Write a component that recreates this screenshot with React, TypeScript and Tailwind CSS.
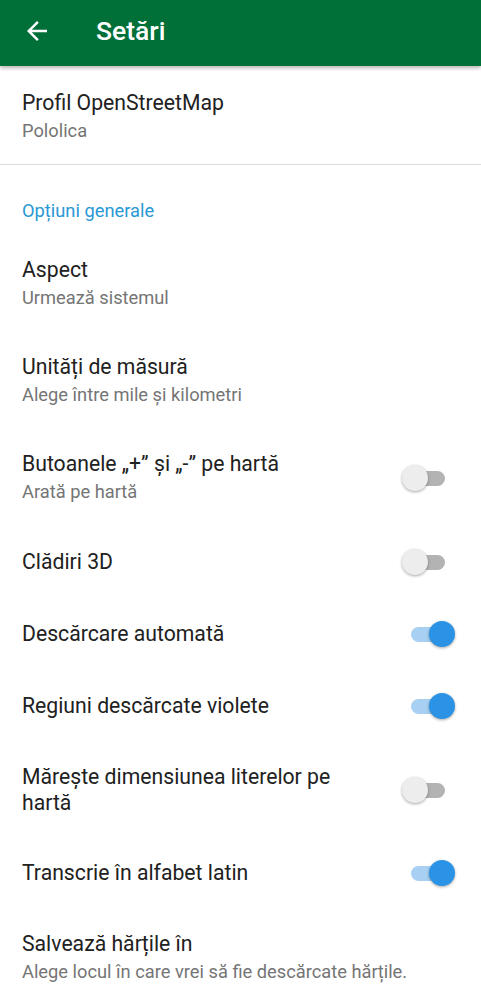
import React from "react";

function Switch({ on }: { on: boolean }) {
  return (
    <div className="relative w-[56px] h-[30px] shrink-0">
      <div
        className={
          "absolute left-[10px] top-[8px] w-[34px] h-[15px] rounded-full " +
          (on ? "bg-[#a7d0f3]" : "bg-[#b3b3b3]")
        }
      />
      <div
        className={
          "absolute top-[2px] w-[26px] h-[26px] rounded-full shadow-[0_1px_3px_rgba(0,0,0,0.35)] " +
          (on ? "left-[28px] bg-[#2a93e6]" : "left-[1px] bg-[#ededed]")
        }
      />
    </div>
  );
}

function Item({
  title,
  sub,
  sw,
  h,
}: {
  title: React.ReactNode;
  sub?: string;
  sw?: boolean;
  h: string;
}) {
  return (
    <div className={"flex items-center pl-[22px] pr-[24px] " + h}>
      <div className="flex-1 min-w-0 pr-[20px]">
        <div className="text-[21.2px] leading-[26px] text-[#212121]">{title}</div>
        {sub && (
          <div className="text-[18.3px] leading-[24px] mt-[3px] text-[#757575]">{sub}</div>
        )}
      </div>
      {sw !== undefined && <Switch on={sw} />}
    </div>
  );
}

export default function App() {
  return (
    <div
      className="w-[481px] h-[999px] bg-white overflow-hidden"
      style={{ fontFamily: "Roboto, 'Noto Sans', sans-serif" }}
    >
      <div className="relative z-10 h-[66px] bg-[#006f38] flex items-center shadow-[0_2px_4px_rgba(0,0,0,0.3)]">
        <svg
          className="ml-[22px] mt-[-4px]"
          width="30"
          height="30"
          viewBox="0 0 24 24"
          fill="#ffffff"
        >
          <path d="M20 11H7.83l5.59-5.59L12 4l-8 8 8 8 1.41-1.41L7.83 13H20v-2z" />
        </svg>
        <div className="ml-[44px] text-white text-[26.5px] font-medium leading-[30px] mt-[-4px]">
          Setări
        </div>
      </div>

      <div className="pl-[22px] pt-[23px] pb-[19px] h-[98px]">
        <div className="text-[21.2px] leading-[28px] text-[#212121]">Profil OpenStreetMap</div>
        <div className="text-[18.3px] leading-[28px] text-[#757575]">Pololica</div>
      </div>
      <div className="h-px bg-[#dcdcdc]" />

      <div className="pl-[22px] pt-[34px] pb-[12px]">
        <div className="text-[18.3px] leading-[24px] text-[#2a98d4]">Opțiuni generale</div>
      </div>

      <Item h="h-[97px]" title="Aspect" sub="Urmează sistemul" />
      <Item h="h-[97px]" title="Unități de măsură" sub="Alege între mile și kilometri" />
      <Item h="h-[97px]" title="Butoanele „+” și „-” pe hartă" sub="Arată pe hartă" sw={false} />
      <Item h="h-[72px]" title="Clădiri 3D" sw={false} />
      <Item h="h-[72px]" title="Descărcare automată" sw={true} />
      <Item h="h-[72px]" title="Regiuni descărcate violete" sw={true} />
      <Item h="h-[95px]" title="Mărește dimensiunea literelor pe hartă" sw={false} />
      <Item h="h-[72px]" title="Transcrie în alfabet latin" sw={true} />
      <Item
        h="h-[97px]"
        title="Salvează hărțile în"
        sub="Alege locul în care vrei să fie descărcate hărțile."
      />
    </div>
  );
}
